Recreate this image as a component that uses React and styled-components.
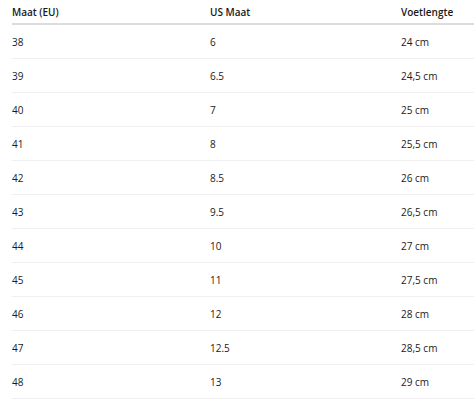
import React from "react";
import styled, { createGlobalStyle } from "styled-components";

const Global = createGlobalStyle`
  html, body { margin: 0; padding: 0; background: #fff; }
  body { font-family: "Open Sans", "Noto Sans", sans-serif; color: #1a1a1a; }
`;

const Table = styled.div`
  margin-left: 12px;
  font-size: 10px;
`;

const Row = styled.div`
  display: grid;
  grid-template-columns: 198px 191px 1fr;
  align-items: center;
  height: ${(p) => (p.$head ? 23 : 33)}px;
  border-bottom: ${(p) => (p.$head ? "2px solid #dcdcdc" : "1px solid #efefef")};
  font-weight: ${(p) => (p.$head ? 600 : 400)};
  line-height: 14px;
`;

const Cell = styled.div`
  white-space: nowrap;
`;

const rows = [
  ["38", "6", "24 cm"],
  ["39", "6.5", "24,5 cm"],
  ["40", "7", "25 cm"],
  ["41", "8", "25,5 cm"],
  ["42", "8.5", "26 cm"],
  ["43", "9.5", "26,5 cm"],
  ["44", "10", "27 cm"],
  ["45", "11", "27,5 cm"],
  ["46", "12", "28 cm"],
  ["47", "12.5", "28,5 cm"],
  ["48", "13", "29 cm"],
];

export default function App() {
  return (
    <>
      <Global />
      <Table>
        <Row $head>
          <Cell>Maat (EU)</Cell>
          <Cell>US Maat</Cell>
          <Cell>Voetlengte</Cell>
        </Row>
        {rows.map((r) => (
          <Row key={r[0]}>
            {r.map((c, i) => (
              <Cell key={i}>{c}</Cell>
            ))}
          </Row>
        ))}
      </Table>
    </>
  );
}
